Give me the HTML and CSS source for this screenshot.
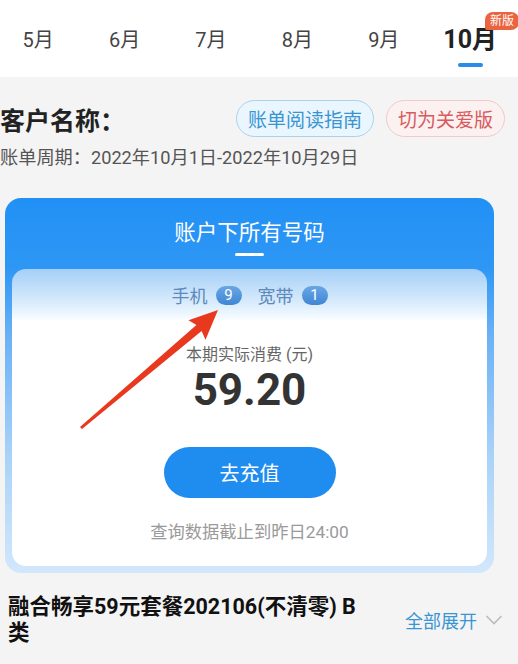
FILE: index.html
```html
<!DOCTYPE html>
<html lang="zh-CN">
<head>
  <meta charset="UTF-8" />
  <title>账单查询</title>
  <link rel="stylesheet" href="styles.css">
</head>
<body>
  <div class="month-bar">
    <div class="month">5月</div>
    <div class="month">6月</div>
    <div class="month">7月</div>
    <div class="month">8月</div>
    <div class="month">9月</div>
    <div class="month active">10月<span class="new-tag">新版</span></div>
  </div>

  <div class="customer-row">
    <div class="customer-name">客户名称：</div>
    <div class="customer-actions">
      <button class="pill pill-blue">账单阅读指南</button>
      <button class="pill pill-red">切为关爱版</button>
    </div>
  </div>
  <div class="bill-cycle">账单周期：2022年10月1日-2022年10月29日</div>

  <div class="account-card">
    <div class="account-title">账户下所有号码</div>
    <div class="account-bar"></div>
    <div class="account-inner">
      <div class="count-row">
        <span>手机</span><span class="count">9</span>
        <span class="count-gap">宽带</span><span class="count">1</span>
      </div>
      <div class="spend-label">本期实际消费 (元)</div>
      <div class="spend-amount">59.20</div>
      <button class="recharge">去充值</button>
      <div class="data-note">查询数据截止到昨日24:00</div>
    </div>

    <!-- 红色标注箭头 -->
    <svg class="mark-arrow" width="518" height="664" viewBox="0 0 518 664">
      <polygon points="80,426.9 196.4,325 188.5,320.2 218,310 205.5,339.8 201.6,331 82,429.1" fill="#e8391f" />
    </svg>
  </div>

  <div class="plan-row">
    <div class="plan-name">融合畅享59元套餐202106(不清零) B 类</div>
    <div class="expand">全部展开
      <svg width="18" height="12" viewBox="0 0 18 12"><path d="M1.5 2 L9 9.5 L16.5 2" fill="none" stroke="#bbbbbb" stroke-width="1.6" /></svg>
    </div>
  </div>
</body>
</html>
```

FILE: styles.css
```css
body {
  margin: 0;
  background: #f4f4f4;
  font-family: Roboto, "Noto Sans CJK SC", sans-serif;
  color: #333;
  overflow: hidden;
}

.month-bar {
  display: flex;
  height: 77px;
  background: #fff;
  margin-left: -5px;
}

.month {
  position: relative;
  flex: 0 0 86.4px;
  text-align: center;
  padding-top: 26px;
  font-size: 20px;
  line-height: 28px;
  color: #444;
}

.month.active {
  font-size: 25px;
  font-weight: bold;
  color: #222;
}

.month.active::after {
  content: "";
  display: block;
  width: 25px;
  height: 4px;
  margin: 9px auto 0;
  border-radius: 2px;
  background: #2a8be8;
}

.new-tag {
  position: absolute;
  top: 12px;
  left: 58px;
  width: 34px;
  height: 18px;
  line-height: 18px;
  font-size: 12px;
  font-weight: normal;
  color: #fff;
  background: #ea643f;
  border-radius: 8px 8px 8px 2px;
}

.customer-row {
  display: flex;
  align-items: center;
  height: 37px;
  margin-top: 23px;
  padding-right: 13px;
}

.customer-name {
  font-size: 25px;
  font-weight: bold;
  color: #222;
}

.customer-actions {
  display: flex;
  gap: 12px;
  margin-left: auto;
}

.pill {
  height: 37px;
  padding: 0 11px;
  font-family: inherit;
  font-size: 19px;
  border-radius: 19px;
  border: 1px solid;
}

.pill-blue {
  color: #3995d2;
  background: #eaf6fd;
  border-color: #a8d2ec;
}

.pill-red {
  color: #d85a5c;
  background: #fbf1f1;
  border-color: #f1c9c9;
}

.bill-cycle {
  margin-top: 8px;
  font-size: 18.2px;
  line-height: 26px;
  color: #555;
}

.account-card {
  position: relative;
  margin: 27px 24px 0 5px;
  padding: 21px 7px 7px;
  border-radius: 16px;
  background: linear-gradient(#2190f5 0, #2e97f5 70px, #6cb2f6 140px, #a9d3f9 260px, #d2e7fc 100%);
}

.account-title {
  text-align: center;
  font-size: 21.5px;
  line-height: 28px;
  color: #fff;
}

.account-bar {
  width: 29px;
  height: 3px;
  margin: 6px auto 13px;
  border-radius: 2px;
  background: #fff;
}

.account-inner {
  padding: 14px 0 22px;
  text-align: center;
  border-radius: 14px;
  background: linear-gradient(#a5cff7 0, #d6eafc 32px, #f3f9ff 48px, #fff 52px);
}

.count-row {
  display: flex;
  justify-content: center;
  align-items: center;
  height: 24px;
  font-size: 18px;
  color: #5e8abb;
}

.count {
  display: inline-block;
  width: 26px;
  height: 19px;
  line-height: 19px;
  margin-left: 8px;
  font-size: 15px;
  color: #fff;
  border-radius: 10px;
  background: linear-gradient(#6aa6e4, #3f86d4);
}

.count-gap {
  margin-left: 16px;
}

.spend-label {
  margin-top: 36px;
  font-size: 16px;
  line-height: 24px;
  color: #666;
}

.spend-amount {
  font-size: 44px;
  line-height: 46px;
  font-weight: bold;
  color: #333;
}

.recharge {
  width: 172px;
  height: 51px;
  margin-top: 34px;
  border: none;
  border-radius: 26px;
  background: #1f8cf0;
  color: #fff;
  font-family: inherit;
  font-size: 20px;
}

.data-note {
  margin-top: 22px;
  font-size: 17.3px;
  line-height: 24px;
  color: #9a9a9a;
}

.mark-arrow {
  position: absolute;
  left: -5px;
  top: -198px;
  pointer-events: none;
}

.plan-row {
  display: flex;
  align-items: center;
  margin-top: 21px;
  padding: 0 15px 0 8px;
}

.plan-name {
  width: 360px;
  font-size: 21.5px;
  line-height: 26px;
  font-weight: bold;
  color: #111;
}

.expand {
  display: flex;
  align-items: center;
  gap: 8px;
  margin-left: auto;
  font-size: 18px;
  color: #3a95d3;
}
```
